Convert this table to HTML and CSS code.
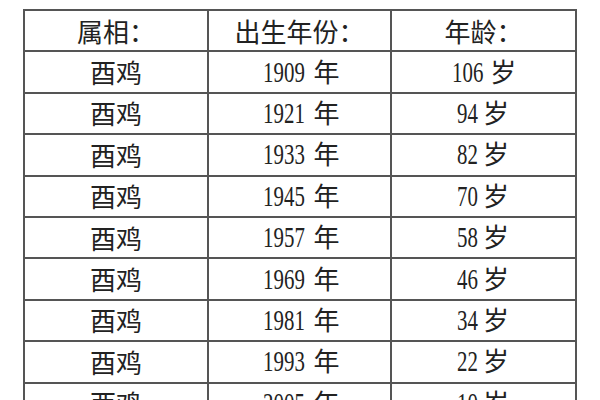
FILE: index.html
```html
<!DOCTYPE html>
<html lang="zh">
<head>
<meta charset="utf-8">
<link rel="stylesheet" href="styles.css">
</head>
<body>
<table class="age-table">
  <thead>
    <tr><th>属相：</th><th>出生年份：</th><th>年龄：</th></tr>
  </thead>
  <tbody>
    <tr><td>酉鸡</td><td><span class="num">1909</span> 年</td><td><span class="num">106</span> 岁</td></tr>
    <tr><td>酉鸡</td><td><span class="num">1921</span> 年</td><td><span class="num">94</span> 岁</td></tr>
    <tr><td>酉鸡</td><td><span class="num">1933</span> 年</td><td><span class="num">82</span> 岁</td></tr>
    <tr><td>酉鸡</td><td><span class="num">1945</span> 年</td><td><span class="num">70</span> 岁</td></tr>
    <tr><td>酉鸡</td><td><span class="num">1957</span> 年</td><td><span class="num">58</span> 岁</td></tr>
    <tr><td>酉鸡</td><td><span class="num">1969</span> 年</td><td><span class="num">46</span> 岁</td></tr>
    <tr><td>酉鸡</td><td><span class="num">1981</span> 年</td><td><span class="num">34</span> 岁</td></tr>
    <tr><td>酉鸡</td><td><span class="num">1993</span> 年</td><td><span class="num">22</span> 岁</td></tr>
    <tr><td>酉鸡</td><td><span class="num">2005</span> 年</td><td><span class="num">10</span> 岁</td></tr>
  </tbody>
</table>
</body>
</html>
```
FILE: styles.css
```css
html, body {
  margin: 0;
  padding: 0;
  background: #ffffff;
  overflow: hidden;
}
body {
  width: 600px;
  height: 400px;
  padding: 9px 0 0 23px;
  box-sizing: border-box;
  font-family: "Noto Sans CJK SC", sans-serif;
  color: #222222;
}
.age-table {
  border-collapse: collapse;
  table-layout: fixed;
  width: 552px;
}
.age-table th,
.age-table td {
  border: 2px solid #555555;
  height: 41.4px;
  padding: 0;
  box-sizing: border-box;
  text-align: center;
  vertical-align: middle;
  font-size: 26px;
  font-weight: normal;
  line-height: 1;
}
.age-table th:nth-child(1), .age-table td:nth-child(1) { width: 184px; }
.age-table th:nth-child(2), .age-table td:nth-child(2) { width: 183px; }
.age-table th:nth-child(3), .age-table td:nth-child(3) { width: 185px; }
.num {
  font-family: "Liberation Serif", serif;
  font-size: 29px;
  display: inline-block;
  transform: scaleX(0.72);
  margin: 0 -5px;
}
```
